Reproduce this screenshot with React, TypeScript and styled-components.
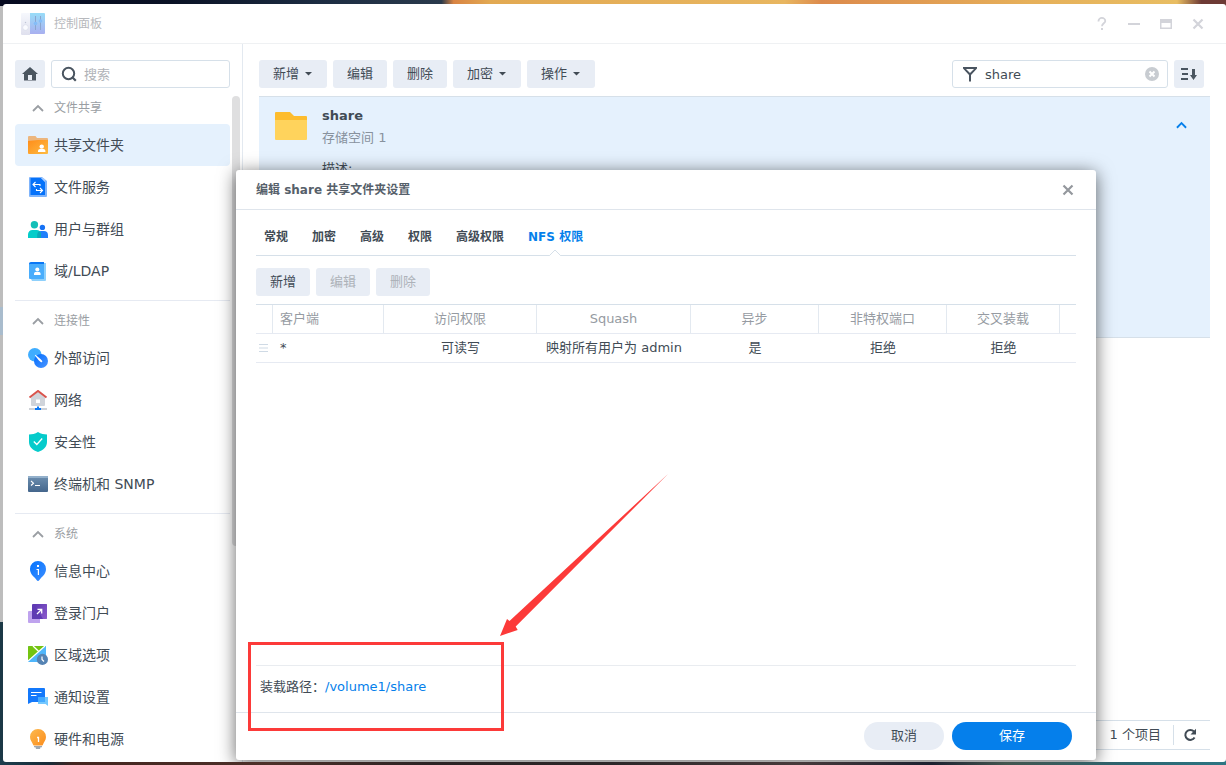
import React from "react";
import styled, { createGlobalStyle, css } from "styled-components";

const INK = "#414b55";
const MUTED = "#969ba2";
const LINE = "#d6e0e9";
const SOFT_LINE = "#e6eaf2";
const FILL = "#e8edf5";
const BLUE = "#057feb";
const RED = "#fc3a39";

const GlobalStyle = createGlobalStyle`
  *, *::before, *::after { box-sizing: border-box; }
  body {
    margin: 0;
    color: ${INK};
    font: 13px/20px "DejaVu Sans", "Noto Sans CJK SC", sans-serif;
  }
  button, input {
    margin: 0;
    padding: 0;
    border: 0;
    background: none;
    color: inherit;
    font: inherit;
  }
  button { white-space: nowrap; }
  svg { display: block; flex: none; }
  h1, h2, h3, p, ul { margin: 0; padding: 0; }
  ul { list-style: none; }
`;

const Desktop = styled.div`
  position: relative;
  display: flex;
  height: 100vh;
  padding: 4px 0 3px 3px;
  overflow: hidden;
  background:
    linear-gradient(90deg, #060a20 0%, #0a1225 14%, #1c2c42 26%, #2a3a4c 36%, #d98443 37%, #e2a952 40%, #e8b660 64%, #dc8a4c 67%, #e6b05a 84%, #e8bd62 96%, #6d3a35 98%) top / 100% 6px no-repeat,
    linear-gradient(90deg, #1d3e4e 0%, #182b38 4%, #44251f 6%, #4d3029 22%, #2b2324 35%, #2c2729 50%, #473a3b 65%, #1c2130 76%, #43554f 82%, #2c6470 92%, #2d7683 100%) bottom / 100% 5px no-repeat,
    #1b3846;
`;

const BackWindow = styled.div`
  position: absolute;
  left: 0;
  top: 6px;
  width: 3px;
  height: 616px;
  overflow: hidden;
  background: linear-gradient(#bdbdbd 0 301px, #a9bccd 301px 329px, #bdbdbd 329px);
`;

const Window = styled.main`
  position: relative;
  flex: 1;
  min-width: 0;
  display: flex;
  flex-direction: column;
  overflow: hidden;
  border-radius: 3px;
  background: #fff;
`;

const TitleBar = styled.header`
  flex: none;
  display: flex;
  align-items: center;
  height: 40px;
  padding: 0 12px 0 18px;
  border-bottom: 1px solid #eff1f3;
`;

const AppTitle = styled.h1`
  flex: 1;
  padding-left: 9px;
  color: #b7b9bd;
  font-size: 12px;
  font-weight: 400;
`;

const ControlButton = styled.button`
  display: grid;
  place-items: center;
  width: 32px;
  height: 28px;
  color: #d3d4da;
`;

const Body = styled.div`
  flex: 1;
  min-height: 0;
  display: flex;
`;

const Sidebar = styled.nav`
  position: relative;
  flex: none;
  width: 240px;
  padding: 16px 12px 0;
  overflow: hidden;
  border-right: 1px solid #e3e9f0;
`;

const ScrollThumb = styled.div`
  position: absolute;
  right: 2px;
  top: 52px;
  width: 8px;
  height: 450px;
  border-radius: 4px;
  background: #dfdfe0;
`;

const SearchRow = styled.div`
  display: flex;
  gap: 6px;
`;

const IconButton = styled.button`
  display: grid;
  place-items: center;
  flex: none;
  width: 30px;
  height: 28px;
  border-radius: 3px;
  background: ${FILL};
  color: #4a5560;
`;

const Field = styled.label<{ $width?: number }>`
  display: flex;
  align-items: center;
  gap: 7px;
  ${(p) => (p.$width ? css`flex: none; width: ${p.$width}px;` : css`flex: 1; min-width: 0;`)}
  height: 28px;
  padding: 0 8px 0 9px;
  border: 1px solid ${LINE};
  border-radius: 3px;
  color: #4a5560;

  input {
    flex: 1;
    min-width: 0;
    height: 24px;
    outline: 0;
    color: ${INK};
  }
  input::placeholder { color: #b0b3b8; opacity: 1; }
`;

const ClearButton = styled.button`
  color: #c8ccd1;
`;

const Section = styled.section`
  & + & {
    margin-top: 8px;
    border-top: 1px solid ${SOFT_LINE};
  }
`;

const SectionTitle = styled.h2`
  display: flex;
  align-items: center;
  gap: 10px;
  height: 36px;
  padding: 4px 0 0 17px;
  color: #9a9ea3;
  font-size: 12px;
  font-weight: 400;
`;

const NavLink = styled.a<{ $active?: boolean }>`
  display: flex;
  align-items: center;
  gap: 6px;
  height: 42px;
  padding-left: 13px;
  border-radius: 4px;
  background: ${(p) => (p.$active ? "#e5f1fd" : "transparent")};
  color: ${INK};
  font-size: 14px;
  text-decoration: none;
`;

const Content = styled.div`
  flex: 1;
  min-width: 0;
  display: flex;
  flex-direction: column;
  padding: 16px 16px 12px;
`;

const Toolbar = styled.div`
  display: flex;
  gap: 6px;
  padding-right: 6px;
`;

const ToolButton = styled.button`
  display: flex;
  align-items: center;
  justify-content: center;
  gap: 6px;
  min-width: 54px;
  height: 28px;
  padding: 0 14px;
  border-radius: 3px;
  background: ${FILL};
  color: ${INK};
  &:disabled { color: #adb2b9; }
`;

const Spacer = styled.div`
  flex: 1;
`;

const ShareCard = styled.article`
  display: flex;
  align-items: flex-start;
  height: 242px;
  margin-top: 8px;
  padding: 8px 23px 0 16px;
  border: solid ${LINE};
  border-width: 1px 0;
  background: #e5f1fd;

  > svg { margin-top: 7px; }
`;

const ShareInfo = styled.div`
  flex: 1;
  padding-left: 15px;
`;

const ShareName = styled.h3`
  font-size: 13px;
  line-height: 22px;
`;

const SharePlace = styled.p`
  color: #88929d;
  line-height: 22px;
`;

const ShareNote = styled.p`
  margin-top: 10px;
`;

const ExpandButton = styled.button`
  margin-top: 16px;
  color: ${BLUE};
`;

const StatusBar = styled.footer`
  display: flex;
  align-items: center;
  justify-content: flex-end;
  height: 30px;
  margin-top: auto;
  padding-right: 13px;
  border: solid ${LINE};
  border-width: 1px 0;

  button {
    margin-left: 12px;
    padding: 3px 0 3px 9px;
    border-left: 1px solid ${LINE};
  }
`;

const Dialog = styled.section`
  position: absolute;
  top: 166px;
  right: 130px;
  bottom: 2px;
  left: 233px;
  display: flex;
  flex-direction: column;
  border-radius: 3px;
  background: #fff;
  box-shadow: 0 3px 18px rgba(0, 0, 0, 0.6);
`;

const DialogHeader = styled.header`
  flex: none;
  display: flex;
  align-items: center;
  justify-content: space-between;
  height: 40px;
  padding: 0 22px 0 20px;
  border-bottom: 1px solid #dfe5ec;

  h2 { color: #56606a; font-size: 12px; }
  button { color: #94989d; }
`;

const DialogBody = styled.div`
  flex: 1;
  display: flex;
  flex-direction: column;
  padding: 0 20px;
`;

const Tabs = styled.div`
  display: flex;
  gap: 24px;
  height: 46px;
  padding: 0 8px;
  border-bottom: 1px solid ${LINE};
`;

const Tab = styled.button<{ $active?: boolean }>`
  position: relative;
  padding-top: 8px;
  color: ${(p) => (p.$active ? BLUE : INK)};
  font-size: 12px;
  font-weight: 700;

  svg {
    position: absolute;
    left: calc(50% - 8px);
    bottom: -1px;
  }
`;

const DialogTools = styled(Toolbar)`
  padding: 12px 0 8px;
`;

const RuleTable = styled.table`
  width: 100%;
  table-layout: fixed;
  border-spacing: 0;
  border-top: 1px solid ${LINE};

  th, td {
    height: 29px;
    padding: 0;
    border-bottom: 1px solid ${SOFT_LINE};
    font-weight: 400;
    text-align: center;
    white-space: nowrap;
  }
  th { color: ${MUTED}; }
  th:not(:last-child) { border-right: 1px solid #e3e9f0; }
  th:nth-child(2), td:nth-child(2) {
    padding-left: 7px;
    text-align: left;
  }
  td svg { margin-left: 3px; }
`;

const MountPath = styled.p`
  height: 47px;
  margin-top: auto;
  padding: 11px 4px;
  border-top: 1px solid #e9ecf0;

  a { color: ${BLUE}; text-decoration: none; }
`;

const DialogFooter = styled.footer`
  flex: none;
  display: flex;
  justify-content: flex-end;
  gap: 8px;
  height: 48px;
  padding: 9px 24px;
  border-top: 1px solid #dfe5ec;
`;

const PillButton = styled.button<{ $primary?: boolean }>`
  width: ${(p) => (p.$primary ? 120 : 80)}px;
  height: 28px;
  border-radius: 14px;
  background: ${(p) => (p.$primary ? BLUE : FILL)};
  color: ${(p) => (p.$primary ? "#fff" : INK)};
`;

const HighlightBox = styled.div`
  position: absolute;
  left: 12px;
  bottom: 29px;
  width: 256px;
  height: 89px;
  border: 3px solid ${RED};
  pointer-events: none;
`;

const HighlightArrow = styled.svg`
  position: absolute;
  left: 264px;
  bottom: 124px;
  pointer-events: none;
`;

const Glyph = ({ children }: { children: React.ReactNode }) => (
  <svg width="20" height="20" viewBox="0 0 20 20" aria-hidden="true">{children}</svg>
);

const Grad = ({ id, from, to }: { id: string; from: string; to: string }) => (
  <linearGradient id={id} x1="0" y1="0" x2="1" y2="1">
    <stop stopColor={from} />
    <stop offset="1" stopColor={to} />
  </linearGradient>
);

const icons = {
  folder: (
    <Glyph>
      <Grad id="fo" from="#ff8d1a" to="#fdbb42" />
      <path d="M0 6V2a1 1 0 0 1 1-1h6.500L9 3h10a1 1 0 0 1 1 1v3H0z" fill="#ecb67e" />
      <path d="M0 6l10-1h10v13a1 1 0 0 1-1 1H1a1 1 0 0 1-1-1z" fill="url(#fo)" />
      <circle cx="13.700" cy="11.600" r="2.200" fill="#fff" />
      <path d="M10 17v-1c0-1.300 1-2 2-2h3.400c1 0 2 .7 2 2v1z" fill="#fff" />
    </Glyph>
  ),
  service: (
    <Glyph>
      <path d="M1 1a1 1 0 0 1 1-1h12l5 4v15a1 1 0 0 1-1 1H2a1 1 0 0 1-1-1z" fill="#7fb4fb" />
      <path d="M2.500 1h10.500l4 4v13H2.500z" fill="#0572fa" />
      <path d="M13 1l4 4V2.500L15 1z" fill="#a5cbff" />
      <path d="M12 9V7.500H5M7.500 5L5 7.500 7.500 10M8.500 12v1.500H14M12 11l2.500 2.500L12 16" fill="none" stroke="#fff" strokeWidth="1.100" />
    </Glyph>
  ),
  users: (
    <Glyph>
      <circle cx="6.400" cy="5.700" r="3.700" fill="#12bfb8" />
      <circle cx="14.400" cy="8.400" r="2.700" fill="#1672f5" />
      <path d="M9 19v-3c0-2.500 1.700-4 4-4h3c2.400 0 4 1.600 4 4v3z" fill="#2080fb" />
      <path d="M0 19v-3.500C0 12.800 1.900 11 4.500 11h4c2.700 0 4.500 1.800 4.500 4.500V19z" fill="#04cdca" />
      <path d="M9.200 19v-3c0-1.900.9-3.200 2.400-3.700.9.800 1.400 1.900 1.400 3.200V19z" fill="#0aa9b8" />
    </Glyph>
  ),
  domain: (
    <Glyph>
      <path d="M16 2h2v17a1 1 0 0 1-1 1H4l-1-2z" fill="#8ed0fb" />
      <path d="M1 3c0-1.300.7-2 2-2h13v3H1z" fill="#0b78f5" />
      <path d="M1 3.500c.5-.4 1-.5 2-.5h13v15H2a1 1 0 0 1-1-1z" fill="#49adfc" />
      <circle cx="9.300" cy="8.600" r="2" fill="#fff" />
      <path d="M6 14v-1.200c0-1.200.9-1.800 1.800-1.800h3c.9 0 1.800.6 1.800 1.800V14z" fill="#fff" />
    </Glyph>
  ),
  access: (
    <Glyph>
      <Grad id="ac" from="#006bff" to="#4b96ff" />
      <circle cx="6.800" cy="6.800" r="6.800" fill="#3fadff" />
      <circle cx="13" cy="13" r="7" fill="url(#ac)" />
      <path d="M6.800 7.300l.6-.6 5 4.200 1.700 1.800a1 1 0 0 1-1.400 1.400l-1.800-1.700z" fill="#fff" />
    </Glyph>
  ),
  network: (
    <Glyph>
      <path d="M3 7.500L10 1.500l7 6V15a1 1 0 0 1-1 1H4a1 1 0 0 1-1-1z" fill="#d0d4da" />
      <path d="M8 9.500h4V13H8z" fill="#fff" />
      <path d="M1.500 7.500L10 .9l8.500 6.600" fill="none" stroke="#d9534c" strokeWidth="1.900" />
      <path d="M1 18h18v2H1z" fill="#cdd1d7" />
      <path d="M9 16.500h2V18h2v2H7v-2h2z" fill="#0b78f5" />
    </Glyph>
  ),
  security: (
    <Glyph>
      <path d="M10 0c3 1.800 6 2.500 9 2.500V10c0 5-4 8.300-9 10-5-1.700-9-5-9-10V2.500C4 2.500 7 1.800 10 0z" fill="#05cbcb" />
      <path d="M5.800 9.500l3 3 5.400-6" fill="none" stroke="#fff" strokeWidth="1.300" />
    </Glyph>
  ),
  terminal: (
    <Glyph>
      <linearGradient id="te" x1="0" y1="0" x2="0" y2="1">
        <stop stopColor="#6d8fb0" />
        <stop offset="1" stopColor="#44668c" />
      </linearGradient>
      <path d="M0 3a1 1 0 0 1 1-1h18a1 1 0 0 1 1 1v14a1 1 0 0 1-1 1H1a1 1 0 0 1-1-1z" fill="url(#te)" />
      <path d="M0 3a1 1 0 0 1 1-1h18a1 1 0 0 1 1 1v1H0z" fill="#93b0cb" />
      <path d="M3 7l2.500 2.200L3 11.500M7 11.500h5" fill="none" stroke="#fff" strokeWidth="1.100" />
    </Glyph>
  ),
  info: (
    <Glyph>
      <Grad id="inf" from="#0374ff" to="#3e8eff" />
      <path d="M10 0a8 8 0 0 1 8 8c0 4.200-2.600 6.500-5 9-1.200 1.200-2 3-3 3s-1.800-1.800-3-3c-2.400-2.500-5-4.800-5-9a8 8 0 0 1 8-8z" fill="url(#inf)" />
      <path d="M9 4h2v2H9zM8.500 8H11v6H9.800V9H8.500z" fill="#fff" />
    </Glyph>
  ),
  portal: (
    <Glyph>
      <Grad id="po" from="#5a35b0" to="#a26bd8" />
      <path d="M0 9a1 1 0 0 1 1-1h11v12H1a1 1 0 0 1-1-1z" fill="#bfa3ee" />
      <path d="M4 2a1 1 0 0 1 1-1h13a1 1 0 0 1 1 1v13a1 1 0 0 1-1 1H4z" fill="#5f3bb3" />
      <path d="M6 1h12a1 1 0 0 1 1 1v13a1 1 0 0 1-1 1h-3z" fill="url(#po)" opacity=".7" />
      <path d="M9 11l4.500-4.500M9.500 6.300h4.200v4.200" fill="none" stroke="#fff" strokeWidth="1.300" />
    </Glyph>
  ),
  region: (
    <Glyph>
      <path d="M0 2a1 1 0 0 1 1-1h17v16H1a1 1 0 0 1-1-1z" fill="#4fb6fb" />
      <path d="M0 2a1 1 0 0 1 1-1h16L0 16z" fill="#74c411" />
      <path d="M0 16L17 1M5 1l6 5.800" fill="none" stroke="#fff" strokeWidth="1.300" />
      <circle cx="14.400" cy="14.400" r="5.600" fill="#5583b3" />
      <path d="M14 11.500v3l2 2" fill="none" stroke="#fff" strokeWidth="1.200" />
    </Glyph>
  ),
  notice: (
    <Glyph>
      <path d="M0 2a1 1 0 0 1 1-1h15a1 1 0 0 1 1 1v13H4l-4 2z" fill="#1378fb" />
      <path d="M10 10h10v9l-2.500-2H10z" fill="#74c8ff" />
      <path d="M10 10h7v5h-7z" fill="#43a9ff" />
      <path d="M3 5.500h10.500M3 8.500h5.500" stroke="#fff" strokeWidth="1.100" />
    </Glyph>
  ),
  power: (
    <Glyph>
      <Grad id="pw" from="#fdbb50" to="#fb8c1c" />
      <path d="M10 0a8 8 0 0 1 8 8c0 3.500-2.200 4.800-3 7.500-.2.800-.6 1-1.300 1H6.300c-.7 0-1.100-.2-1.300-1C4.200 12.800 2 11.500 2 8a8 8 0 0 1 8-8z" fill="url(#pw)" />
      <path d="M9 8.500h1.500V13" fill="none" stroke="#fff" strokeWidth="1.300" />
      <path d="M6 17h8v1.200h-1.500L12 20H8l-.5-1.800H6z" fill="#9fa8b1" />
    </Glyph>
  ),
};

const sections = [
  {
    title: "文件共享",
    items: [
      { icon: icons.folder, label: "共享文件夹", active: true },
      { icon: icons.service, label: "文件服务" },
      { icon: icons.users, label: "用户与群组" },
      { icon: icons.domain, label: "域/LDAP" },
    ],
  },
  {
    title: "连接性",
    items: [
      { icon: icons.access, label: "外部访问" },
      { icon: icons.network, label: "网络" },
      { icon: icons.security, label: "安全性" },
      { icon: icons.terminal, label: "终端机和 SNMP" },
    ],
  },
  {
    title: "系统",
    items: [
      { icon: icons.info, label: "信息中心" },
      { icon: icons.portal, label: "登录门户" },
      { icon: icons.region, label: "区域选项" },
      { icon: icons.notice, label: "通知设置" },
      { icon: icons.power, label: "硬件和电源" },
    ],
  },
];

const tools = [
  { label: "新增", menu: true },
  { label: "编辑" },
  { label: "删除" },
  { label: "加密", menu: true },
  { label: "操作", menu: true },
];

const tabs = ["常规", "加密", "高级", "权限", "高级权限", "NFS 权限"];
const columnWidths = [17, 111, 153, 154, 128, 128, 113, 16];
const headings = ["", "客户端", "访问权限", "Squash", "异步", "非特权端口", "交叉装载", ""];
const rule = ["*", "可读写", "映射所有用户为 admin", "是", "拒绝", "拒绝", ""];

const Cross = () => (
  <svg width="12" height="12" viewBox="0 0 12 12" aria-hidden="true">
    <path d="M1.500 1.500l9 9M10.500 1.500l-9 9" stroke="currentColor" strokeWidth="2.200" />
  </svg>
);

const Chevron = ({ width, stroke }: { width: number; stroke: number }) => (
  <svg width={width} height="8" viewBox="0 0 12 8" aria-hidden="true">
    <path d="M1 7l5-5 5 5" fill="none" stroke="currentColor" strokeWidth={stroke} />
  </svg>
);

const Caret = () => (
  <svg width="8" height="4" viewBox="0 0 8 4" aria-hidden="true">
    <path d="M0 0h7L3.500 3.500z" fill="currentColor" />
  </svg>
);

const AppLogo = () => (
  <svg width="24" height="24" viewBox="0 0 24 24" aria-hidden="true">
    <defs>
      <linearGradient id="panel" x1="0" y1="0" x2="0" y2="1">
        <stop stopColor="#98dcf8" />
        <stop offset="1" stopColor="#a9b0f0" />
      </linearGradient>
      <linearGradient id="face" x1="0" y1="0" x2="0" y2="1">
        <stop stopColor="#f6f8fd" />
        <stop offset="1" stopColor="#dfe0ee" />
      </linearGradient>
    </defs>
    <path d="M0 2a1 1 0 0 1 1-1h8v22H1a1 1 0 0 1-1-1z" fill="url(#face)" />
    <path d="M9 1h14a1 1 0 0 1 1 1v19a1 1 0 0 1-1 1H9z" fill="url(#panel)" />
    <circle cx="4.500" cy="15.500" r="2.800" fill="#fafbff" stroke="#d5d8e6" strokeWidth=".6" />
    <circle cx="4.500" cy="10.500" r=".7" fill="#c0c5d6" />
    <path d="M14.500 4v14M19.500 4v14" stroke="#8ba6cf" strokeWidth="1" />
    <circle cx="14.500" cy="11.500" r="1.800" fill="#84bdf8" />
    <circle cx="19.500" cy="9" r="1.800" fill="#84bdf8" />
  </svg>
);

export default function App() {
  return (
    <Desktop>
      <GlobalStyle />
      <BackWindow />
      <Window>
        <TitleBar>
          <AppLogo />
          <AppTitle>控制面板</AppTitle>
          <ControlButton aria-label="帮助">
            <svg width="10" height="14" viewBox="0 0 10 14">
              <path d="M1.500 4.500V4a3.300 3 0 0 1 6.800 0c0 2.200-3.300 2.500-3.300 5.200" fill="none" stroke="currentColor" strokeWidth="1.800" />
              <path d="M4 11h2v2H4z" fill="currentColor" />
            </svg>
          </ControlButton>
          <ControlButton aria-label="最小化">
            <svg width="12" height="12" viewBox="0 0 12 12"><path d="M0 5h12v2H0z" fill="currentColor" /></svg>
          </ControlButton>
          <ControlButton aria-label="最大化">
            <svg width="12" height="10" viewBox="0 0 12 10">
              <path d="M0 0h12v10H0zM1.500 4v4.500h9V4z" fill="currentColor" fillRule="evenodd" />
            </svg>
          </ControlButton>
          <ControlButton aria-label="关闭"><Cross /></ControlButton>
        </TitleBar>
        <Body>
          <Sidebar>
            <SearchRow>
              <IconButton aria-label="主页">
                <svg width="16" height="14" viewBox="0 0 16 14">
                  <path d="M8 0l8 7h-2v6.500H2V7H0zM6 8v5h4V8z" fill="currentColor" fillRule="evenodd" />
                </svg>
              </IconButton>
              <Field>
                <svg width="16" height="16" viewBox="0 0 16 16" aria-hidden="true">
                  <circle cx="7.500" cy="7.500" r="5.700" fill="none" stroke="currentColor" strokeWidth="2" />
                  <path d="M11 11l3.800 3.800" stroke="currentColor" strokeWidth="2.200" />
                </svg>
                <input type="search" placeholder="搜索" aria-label="搜索" />
              </Field>
            </SearchRow>
            {sections.map((section) => (
              <Section key={section.title}>
                <SectionTitle><Chevron width={12} stroke={1.8} />{section.title}</SectionTitle>
                <ul>
                  {section.items.map((item) => (
                    <li key={item.label}>
                      <NavLink href="#" $active={"active" in item}>{item.icon}{item.label}</NavLink>
                    </li>
                  ))}
                </ul>
              </Section>
            ))}
            <ScrollThumb />
          </Sidebar>
          <Content>
            <Toolbar>
              {tools.map((tool) => (
                <ToolButton key={tool.label}>{tool.label}{tool.menu && <Caret />}</ToolButton>
              ))}
              <Spacer />
              <Field $width={216}>
                <svg width="16" height="16" viewBox="0 0 16 16" aria-hidden="true">
                  <path d="M2.500 2h11L9 8v7.500H7V8z" fill="none" />
                  <path d="M1 1h14v1.500L9 9v6.500H7V9L1 2.500zM4 3l4 4 4-4z" fill="currentColor" fillRule="evenodd" />
                </svg>
                <input type="text" defaultValue="share" aria-label="筛选" />
                <ClearButton aria-label="清除">
                  <svg width="14" height="14" viewBox="0 0 14 14">
                    <circle cx="7" cy="7" r="7" fill="currentColor" />
                    <path d="M4.500 4.500l5 5M9.500 4.500l-5 5" stroke="#fff" strokeWidth="2" />
                  </svg>
                </ClearButton>
              </Field>
              <IconButton aria-label="排序">
                <svg width="16" height="14" viewBox="0 0 16 14">
                  <path d="M0 1h7v2H0zM1 6h6v2H1zM0 11h7v2H0zM11 2h3v6h2l-3.500 5L9 8h2z" fill="currentColor" />
                </svg>
              </IconButton>
            </Toolbar>
            <ShareCard>
              <svg width="32" height="28" viewBox="0 0 32 28" aria-hidden="true">
                <path d="M0 1a1 1 0 0 1 1-1h14l4 4h12a1 1 0 0 1 1 1v5H0z" fill="#fdbc2d" />
                <path d="M0 8h32v19a1 1 0 0 1-1 1H1a1 1 0 0 1-1-1z" fill="#ffd35c" />
              </svg>
              <ShareInfo>
                <ShareName>share</ShareName>
                <SharePlace>存储空间 1</SharePlace>
                <ShareNote>描述:</ShareNote>
              </ShareInfo>
              <ExpandButton aria-label="收起"><Chevron width={11} stroke={2} /></ExpandButton>
            </ShareCard>
            <StatusBar>
              1 个项目
              <button aria-label="刷新">
                <svg width="14" height="14" viewBox="0 0 14 14">
                  <path d="M11.600 9.500A5 5 0 1 1 11 3.500" fill="none" stroke="currentColor" strokeWidth="2" />
                  <path d="M13 .8v5.700H7.500z" fill="currentColor" />
                </svg>
              </button>
            </StatusBar>
          </Content>
        </Body>
        <Dialog role="dialog" aria-labelledby="dialog-title">
          <DialogHeader>
            <h2 id="dialog-title">编辑 share 共享文件夹设置</h2>
            <button aria-label="关闭"><Cross /></button>
          </DialogHeader>
          <DialogBody>
            <Tabs role="tablist">
              {tabs.map((tab, i) => {
                const active = i === tabs.length - 1;
                return (
                  <Tab key={tab} role="tab" aria-selected={active} $active={active}>
                    {tab}
                    {active && (
                      <svg width="14" height="7" viewBox="0 0 14 7">
                        <path d="M1 7l6-6 6 6z" fill="#fff" />
                        <path d="M0 6.500h1.500L7 1l5.500 5.500H14" fill="none" stroke={LINE} />
                      </svg>
                    )}
                  </Tab>
                );
              })}
            </Tabs>
            <DialogTools>
              <ToolButton>新增</ToolButton>
              <ToolButton disabled>编辑</ToolButton>
              <ToolButton disabled>删除</ToolButton>
            </DialogTools>
            <RuleTable>
              <colgroup>
                {columnWidths.map((w, i) => <col key={i} width={w} />)}
              </colgroup>
              <thead>
                <tr>{headings.map((h, i) => <th key={i}>{h}</th>)}</tr>
              </thead>
              <tbody>
                <tr>
                  <td>
                    <svg width="9" height="8" viewBox="0 0 9 8" aria-hidden="true">
                      <path d="M0 .5h9M0 4h9M0 7.500h9" stroke="#cfdae5" />
                    </svg>
                  </td>
                  {rule.map((cell, i) => <td key={i}>{cell}</td>)}
                </tr>
              </tbody>
            </RuleTable>
            <MountPath>装载路径：<a href="#">/volume1/share</a></MountPath>
          </DialogBody>
          <DialogFooter>
            <PillButton>取消</PillButton>
            <PillButton $primary>保存</PillButton>
          </DialogFooter>
          <HighlightBox />
          <HighlightArrow width="168" height="162" viewBox="0 0 168 162" aria-hidden="true">
            <path d="M0 162L7 145l2.500 2L168 0 15.700 152.500l2 3.500z" fill={RED} />
          </HighlightArrow>
        </Dialog>
      </Window>
    </Desktop>
  );
}
